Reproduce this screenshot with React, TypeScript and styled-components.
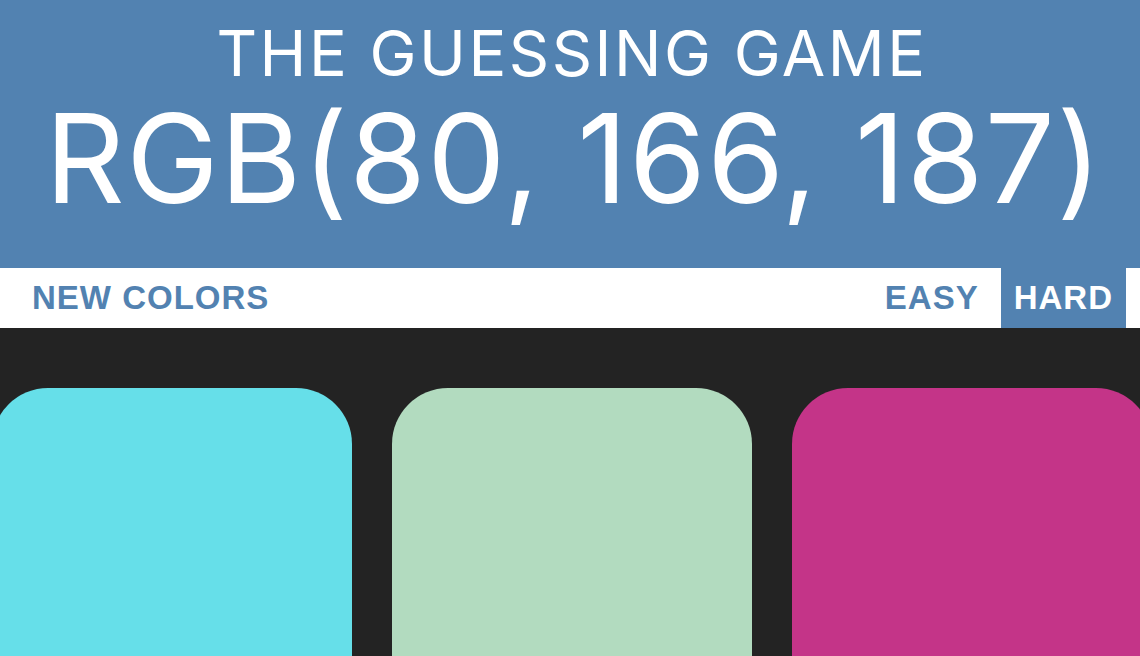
import React from "react";
import styled, { createGlobalStyle } from "styled-components";

const Global = createGlobalStyle`
  html, body { margin: 0; padding: 0; background: #232323; overflow: hidden; }
  * { box-sizing: border-box; }
`;

const Page = styled.div`
  width: 1140px;
  height: 656px;
  background: #232323;
  overflow: hidden;
`;

const Header = styled.header`
  background: #5282b1;
  color: #fff;
  padding: 17px 0 41px;
  text-align: center;
  font-family: Inter, "Open Sans", sans-serif;
  font-weight: 400;
`;

const Title = styled.h1`
  margin: 0;
  font-size: 63px;
  line-height: 72px;
  font-weight: 400;
  letter-spacing: 2.5px;
  padding-left: 4px;
`;

const Target = styled.div`
  font-size: 124px;
  line-height: 138px;
  font-weight: 400;
  letter-spacing: 1.4px;
  padding-left: 8px;
`;

const Stripe = styled.nav`
  height: 60px;
  background: #fff;
  display: flex;
  align-items: stretch;
  padding: 0 14px 0 19px;
`;

const Spacer = styled.div`
  flex: 1;
`;

const Button = styled.button<{ $active?: boolean }>`
  border: none;
  margin: 0;
  padding: 0 13px;
  height: 60px;
  background: ${(p) => (p.$active ? "#5282b1" : "#fff")};
  color: ${(p) => (p.$active ? "#fff" : "#5282b1")};
  font-family: "Liberation Sans", Arial, sans-serif;
  font-weight: 700;
  font-size: 33px;
  letter-spacing: 1px;
  text-transform: uppercase;
  cursor: pointer;
  & + & { margin-left: 9px; }
`;

const Board = styled.main`
  display: flex;
  justify-content: center;
  padding-top: 60px;
  padding-left: 4px;
`;

const Grid = styled.div`
  flex-shrink: 0;
  width: 1160px;
  display: grid;
  grid-template-columns: repeat(3, 360px);
  column-gap: 40px;
`;

const Square = styled.div<{ $color: string }>`
  width: 360px;
  height: 360px;
  border-radius: 56px;
  background: ${(p) => p.$color};
`;

const colors = ["#66dfe9", "#b2dbbf", "#c43488"];

export default function App() {
  return (
    <Page>
      <Global />
      <Header>
        <Title>THE GUESSING GAME</Title>
        <Target>RGB(80, 166, 187)</Target>
      </Header>
      <Stripe>
        <Button>New Colors</Button>
        <Spacer />
        <Button>Easy</Button>
        <Button $active>Hard</Button>
      </Stripe>
      <Board>
        <Grid>
          {colors.map((c) => (
            <Square key={c} $color={c} />
          ))}
        </Grid>
      </Board>
    </Page>
  );
}
